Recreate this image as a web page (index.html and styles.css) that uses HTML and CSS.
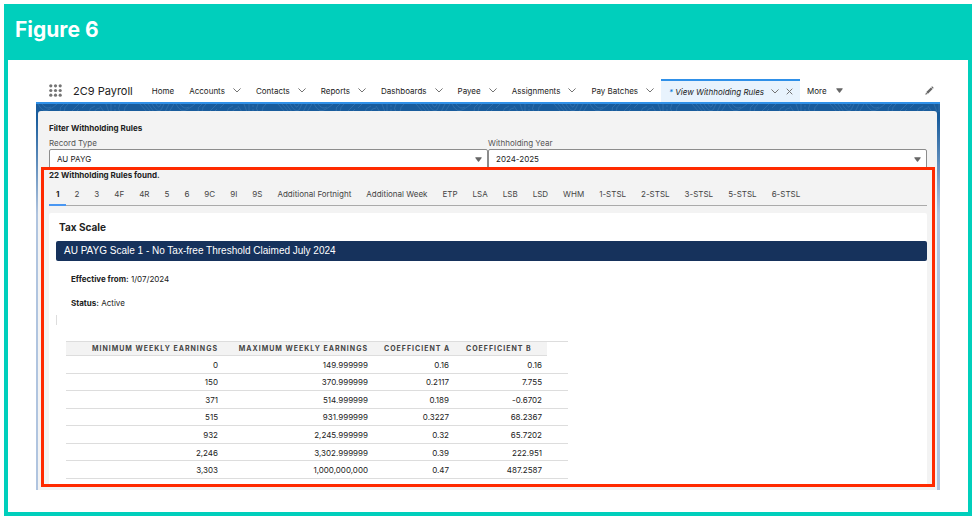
FILE: index.html
```html
<!DOCTYPE html>
<html lang="en">
<head>
<meta charset="utf-8">
<title>2C9 Payroll - View Withholding Rules</title>
<link rel="stylesheet" href="styles.css">
</head>
<body>
<svg class="defs" aria-hidden="true">
  <symbol id="chev" viewBox="0 0 8 5"><path d="M.7.7 4 4 7.3.7" fill="none" stroke="currentColor" stroke-linecap="round"/></symbol>
  <symbol id="caret" viewBox="0 0 7 5"><path d="M.7.3h5.6q.7 0 .3.6L4 4.5q-.5.5-1 0L.4.9Q0 .3.7.3z" fill="currentColor"/></symbol>
</svg>
<figure class="figure">
  <figcaption class="caption">Figure 6</figcaption>
  <div class="app">
    <header class="nav">
      <button class="launcher" aria-label="App launcher"><svg viewBox="0 0 13 13" width="13" height="13" fill="#747474"><circle cx="1.8" cy="1.8" r="1.6"/><circle cx="6.5" cy="1.8" r="1.6"/><circle cx="11.2" cy="1.8" r="1.6"/><circle cx="1.8" cy="6.5" r="1.6"/><circle cx="6.5" cy="6.5" r="1.6"/><circle cx="11.2" cy="6.5" r="1.6"/><circle cx="1.8" cy="11.2" r="1.6"/><circle cx="6.5" cy="11.2" r="1.6"/><circle cx="11.2" cy="11.2" r="1.6"/></svg></button>
      <span class="app-name">2C9 Payroll</span>
      <nav class="links">
        <a href="#">Home</a>
        <a href="#">Accounts<svg class="chev"><use href="#chev"/></svg></a>
        <a href="#">Contacts<svg class="chev"><use href="#chev"/></svg></a>
        <a href="#">Reports<svg class="chev"><use href="#chev"/></svg></a>
        <a href="#">Dashboards<svg class="chev"><use href="#chev"/></svg></a>
        <a href="#">Payee<svg class="chev"><use href="#chev"/></svg></a>
        <a href="#">Assignments<svg class="chev"><use href="#chev"/></svg></a>
        <a href="#">Pay Batches<svg class="chev"><use href="#chev"/></svg></a>
      </nav>
      <div class="current">
        <a href="#"><span class="star">*</span> View Withholding Rules</a>
        <svg class="chev"><use href="#chev"/></svg>
        <button aria-label="Close tab"><svg viewBox="0 0 7 7" width="7" height="7"><path d="M.7.7l5.6 5.6M6.3.7.7 6.3" fill="none" stroke="#747474"/></svg></button>
      </div>
      <button class="more">More<svg class="caret"><use href="#caret"/></svg></button>
      <button class="edit" aria-label="Edit navigation"><svg viewBox="0 0 9 9" width="9" height="9" fill="#666"><path d="M.3 8.7 1 6.4l1.6 1.6zM1.3 6 5.9 1.4l1.7 1.7L3 7.7zM6.3 1l.4-.4q.4-.4.8 0l.9.9q.4.4 0 .8l-.4.4z"/></svg></button>
    </header>
    <div class="backdrop">
      <svg class="contours" aria-hidden="true">
        <defs>
          <pattern id="topo" width="138" height="8" patternUnits="userSpaceOnUse">
            <g fill="none" stroke="#6fa3d0" stroke-opacity=".4" stroke-width=".6">
              <path d="M2 0q5 10 12 5 5-3 7-5M6 0q4 6 9 3M24 8q-1-5 4-8M28 8q0-5 4-8M35 8l8-8M40 8l3-3M46 4l4-4M53 8q0-4 6-6M58 8q2-4 6-4M64 2l4 6M70 0l3 8M75 0v8M79 1v2M79 5v2M84 0q-3 5 0 8M88 8q0-5 4-8M104 0l7 8M108 0l7 8M112 0l6 8M116 0q5 9 9 6l3-6M120 0q3 6 5 0M129 8l4-8M133 8l5-8"/>
            </g>
          </pattern>
        </defs>
        <rect width="100%" height="100%" fill="url(#topo)"/>
      </svg>
      <main class="panel">
        <form class="filters">
          <h2>Filter Withholding Rules</h2>
          <div class="fields">
            <div class="field">
              <label for="type">Record Type</label>
              <div class="select"><select id="type"><option>AU PAYG</option></select><svg class="caret"><use href="#caret"/></svg></div>
            </div>
            <div class="field">
              <label for="year">Withholding Year</label>
              <div class="select"><select id="year"><option>2024-2025</option></select><svg class="caret"><use href="#caret"/></svg></div>
            </div>
          </div>
        </form>
        <section class="results">
          <h2>22 Withholding Rules found.</h2>
          <div class="tabs" role="tablist">
            <button class="on" role="tab" aria-selected="true">1</button>
            <button role="tab">2</button>
            <button role="tab">3</button>
            <button role="tab">4F</button>
            <button role="tab">4R</button>
            <button role="tab">5</button>
            <button role="tab">6</button>
            <button role="tab">9C</button>
            <button role="tab">9I</button>
            <button role="tab">9S</button>
            <button role="tab">Additional Fortnight</button>
            <button role="tab">Additional Week</button>
            <button role="tab">ETP</button>
            <button role="tab">LSA</button>
            <button role="tab">LSB</button>
            <button role="tab">LSD</button>
            <button role="tab">WHM</button>
            <button role="tab">1-STSL</button>
            <button role="tab">2-STSL</button>
            <button role="tab">3-STSL</button>
            <button role="tab">5-STSL</button>
            <button role="tab">6-STSL</button>
          </div>
          <article class="card">
            <h3>Tax Scale</h3>
            <h4>AU PAYG Scale 1 - No Tax-free Threshold Claimed July 2024</h4>
            <p><b>Effective from:</b> 1/07/2024</p>
            <p><b>Status:</b> Active</p>
            <div class="tick"></div>
            <table>
              <colgroup><col class="c1"><col class="c2"><col class="c3"><col class="c4"><col class="c5"></colgroup>
              <thead><tr><th>Minimum Weekly Earnings</th><th>Maximum Weekly Earnings</th><th>Coefficient A</th><th class="b">Coefficient B</th><td></td></tr></thead>
              <tbody>
                <tr><td>0</td><td>149.999999</td><td>0.16</td><td class="b">0.16</td><td></td></tr>
                <tr><td>150</td><td>370.999999</td><td>0.2117</td><td class="b">7.755</td><td></td></tr>
                <tr><td>371</td><td>514.999999</td><td>0.189</td><td class="b">-0.6702</td><td></td></tr>
                <tr><td>515</td><td>931.999999</td><td>0.3227</td><td class="b">68.2367</td><td></td></tr>
                <tr><td>932</td><td>2,245.999999</td><td>0.32</td><td class="b">65.7202</td><td></td></tr>
                <tr><td>2,246</td><td>3,302.999999</td><td>0.39</td><td class="b">222.951</td><td></td></tr>
                <tr><td>3,303</td><td>1,000,000,000</td><td>0.47</td><td class="b">487.2587</td><td></td></tr>
              </tbody>
            </table>
          </article>
        </section>
      </main>
    </div>
  </div>
</figure>
</body>
</html>
```
FILE: styles.css
```css
* { box-sizing: border-box; }
body { margin: 0; padding: 4px; background: #fff; color: #222; font: 8px/12px Inter, "Liberation Sans", sans-serif; }
h2, h3, h4, p { margin: 0; }
button, select { font: inherit; color: inherit; margin: 0; padding: 0; border: 0; background: none; }
a { color: inherit; text-decoration: none; }
svg { display: block; flex: none; }
.defs { position: absolute; width: 0; height: 0; }

.figure { margin: 0; border: 4px solid #00cfbc; }
.caption { height: 52px; padding: 9px 7px; background: #00cfbc; color: #fff; font-size: 21px; line-height: 26px; font-weight: 700; }
.app { padding: 16px 28px 22px; }

.nav { display: flex; align-items: center; height: 28px; padding: 3px 6px 0 13px; border-bottom: 2px solid #2f90e8; white-space: nowrap; }
.nav > * { flex: none; }
.app-name { margin: 0 19px 0 11px; font-size: 11px; line-height: 16px; }
.links { display: flex; gap: 15px; margin-right: 7px; }
.links a { display: flex; align-items: center; gap: 8px; }
.chev { width: 8px; height: 5px; color: #747474; }
.caret { width: 7px; height: 5px; color: #666; }
.current { display: flex; align-items: center; gap: 7px; align-self: stretch; padding: 0 7px 0 8px; border-top: 2px solid #2f90e8; background: #e8f3fd; font-style: italic; }
.star { color: #0176d3; }
.more { display: flex; align-items: center; gap: 9px; margin-left: 7px; }
.edit { margin-left: auto; }

.backdrop { position: relative; padding: 7px 3px 0 2px; background: linear-gradient(#195c9c 0, #195c9c 14px, #b0c4df 110px); }
.contours { position: absolute; top: 0; left: 0; width: 100%; height: 8px; }
.panel { position: relative; padding: 11px 2px 3px 3px; border-radius: 3px 3px 0 0; background: #f3f3f3; }
.filters { padding: 0 8px; }
h2 { font-size: 8px; line-height: 12px; font-weight: 700; }
.fields { display: flex; }
.field { flex: 1; }
.field label { display: block; padding-top: 3px; color: #555; }
.select { position: relative; }
.select select { display: block; width: 100%; height: 20px; padding: 0 7px; border: 1px solid #8c8c8c; border-radius: 2px; background: #fff; appearance: none; }
.select .caret { position: absolute; right: 6px; top: 8px; }

.results { position: relative; margin-top: -2px; padding: 0 5px; border: 3px solid #ff2a00; }
.results h2 { line-height: 11px; }
.tabs { display: flex; gap: 1px; height: 25px; border-bottom: 1px solid #aaa; white-space: nowrap; color: #444; }
.tabs button { height: 25px; padding: 2px 7px 0; border-bottom: 2px solid transparent; }
.tabs .on { border-color: #4a97f2; color: #222; font-weight: 700; }

.card { margin-top: 7px; padding: 7px 0 5px 7px; border-radius: 2px 2px 0 0; background: #fff; }
.card h3 { padding-left: 3px; font-size: 10px; line-height: 14px; font-weight: 700; }
.card h4 { margin: 7px 0 6px; padding: 0 8px; border-radius: 2px; background: #16325c; color: #fff; font-family: "Liberation Sans", sans-serif; font-size: 10px; line-height: 20px; font-weight: 400; }
.card p { padding: 6px 15px; }
.tick { width: 1px; height: 10px; margin-bottom: 16px; background: #ddd; }

table { width: 502px; height: 138px; margin-left: 10px; table-layout: fixed; border-collapse: collapse; border-top: 1px solid #ddd; }
.c1 { width: 162px; }
.c2 { width: 150px; }
.c3 { width: 81px; }
.c4 { width: 88px; }
th, td { padding: 1px 10px 0 6px; border-bottom: 1px solid #ddd; text-align: right; white-space: nowrap; }
th { background: #f3f3f3; color: #444; font-size: 7px; font-weight: 700; letter-spacing: 1px; text-transform: uppercase; }
thead tr { height: 14px; }
thead td { border-bottom: 0; }
th.b { padding-left: 7px; text-align: left; }
td.b { padding-right: 5px; }
```
